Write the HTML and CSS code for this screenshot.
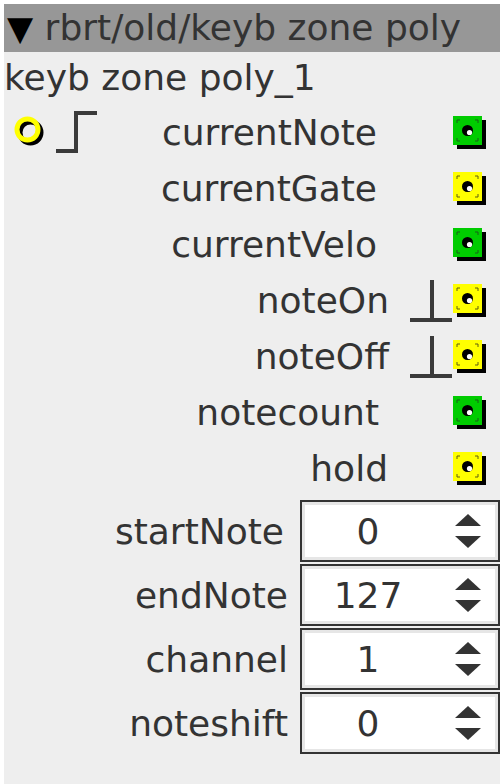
FILE: index.html
```html
<!DOCTYPE html>
<html lang="en">
<head>
    <meta charset="UTF-8">
    <meta name="viewport" content="width=device-width, initial-scale=1.0">
    <title>keyb zone poly</title>
    <link rel="stylesheet" href="styles.css">
</head>
<body>

    <div class="obj">
        <div class="obj-head"><span class="caret">▼</span> rbrt/old/keyb zone poly</div>
        <div class="obj-name">keyb zone poly_1</div>

        <div class="io-row">
            <div class="inlets">
                <svg class="inlet" width="34" height="34" viewBox="0 0 34 34">
                    <circle cx="16.5" cy="16.5" r="10.5" fill="none" stroke="#000" stroke-width="5"/>
                    <circle cx="13.5" cy="13.5" r="10.5" fill="none" stroke="#ffff00" stroke-width="5"/>
                </svg>
                <svg class="step" width="44" height="46" viewBox="0 0 44 46">
                    <path d="M1 41 H21 V3 H42" fill="none" stroke="#3a3a3a" stroke-width="4"/>
                </svg>
            </div>
            <span class="io-label">currentNote</span>
            <span class="io-icon"></span>
            <svg class="outlet" width="36" height="36" viewBox="0 0 36 36">
                <rect x="4" y="4" width="29" height="29" fill="#000"/>
                <rect x="0" y="0" width="29" height="29" fill="#00cc00"/>
                <path d="M4 7 V4 H7 M22 4 H25 V7 M25 22 V25 H22 M7 25 H4 V22" fill="none" stroke="#1b5e1b" stroke-width="1"/>
                <circle cx="14.5" cy="14.5" r="5.5" fill="#000"/>
                <circle cx="16.5" cy="16.5" r="2.6" fill="#fff"/>
            </svg>
        </div>

        <div class="io-row">
            <span class="io-label">currentGate</span>
            <span class="io-icon"></span>
            <svg class="outlet" width="36" height="36" viewBox="0 0 36 36">
                <rect x="4" y="4" width="29" height="29" fill="#000"/>
                <rect x="0" y="0" width="29" height="29" fill="#ffff00"/>
                <path d="M4 7 V4 H7 M22 4 H25 V7 M25 22 V25 H22 M7 25 H4 V22" fill="none" stroke="#5e5e10" stroke-width="1"/>
                <circle cx="14.5" cy="14.5" r="5.5" fill="#000"/>
                <circle cx="16.5" cy="16.5" r="2.6" fill="#fff"/>
            </svg>
        </div>

        <div class="io-row">
            <span class="io-label">currentVelo</span>
            <span class="io-icon"></span>
            <svg class="outlet" width="36" height="36" viewBox="0 0 36 36">
                <rect x="4" y="4" width="29" height="29" fill="#000"/>
                <rect x="0" y="0" width="29" height="29" fill="#00cc00"/>
                <path d="M4 7 V4 H7 M22 4 H25 V7 M25 22 V25 H22 M7 25 H4 V22" fill="none" stroke="#1b5e1b" stroke-width="1"/>
                <circle cx="14.5" cy="14.5" r="5.5" fill="#000"/>
                <circle cx="16.5" cy="16.5" r="2.6" fill="#fff"/>
            </svg>
        </div>

        <div class="io-row">
            <span class="io-label io-label-trig">noteOn</span>
            <svg class="io-icon" width="44" height="46" viewBox="0 0 44 46">
                <path d="M2 42 H44 M24 2 V42" fill="none" stroke="#3a3a3a" stroke-width="4"/>
            </svg>
            <svg class="outlet" width="36" height="36" viewBox="0 0 36 36">
                <rect x="4" y="4" width="29" height="29" fill="#000"/>
                <rect x="0" y="0" width="29" height="29" fill="#ffff00"/>
                <path d="M4 7 V4 H7 M22 4 H25 V7 M25 22 V25 H22 M7 25 H4 V22" fill="none" stroke="#5e5e10" stroke-width="1"/>
                <circle cx="14.5" cy="14.5" r="5.5" fill="#000"/>
                <circle cx="16.5" cy="16.5" r="2.6" fill="#fff"/>
            </svg>
        </div>

        <div class="io-row">
            <span class="io-label io-label-trig">noteOff</span>
            <svg class="io-icon" width="44" height="46" viewBox="0 0 44 46">
                <path d="M2 42 H44 M24 2 V42" fill="none" stroke="#3a3a3a" stroke-width="4"/>
            </svg>
            <svg class="outlet" width="36" height="36" viewBox="0 0 36 36">
                <rect x="4" y="4" width="29" height="29" fill="#000"/>
                <rect x="0" y="0" width="29" height="29" fill="#ffff00"/>
                <path d="M4 7 V4 H7 M22 4 H25 V7 M25 22 V25 H22 M7 25 H4 V22" fill="none" stroke="#5e5e10" stroke-width="1"/>
                <circle cx="14.5" cy="14.5" r="5.5" fill="#000"/>
                <circle cx="16.5" cy="16.5" r="2.6" fill="#fff"/>
            </svg>
        </div>

        <div class="io-row">
            <span class="io-label io-label-count">notecount</span>
            <span class="io-icon"></span>
            <svg class="outlet" width="36" height="36" viewBox="0 0 36 36">
                <rect x="4" y="4" width="29" height="29" fill="#000"/>
                <rect x="0" y="0" width="29" height="29" fill="#00cc00"/>
                <path d="M4 7 V4 H7 M22 4 H25 V7 M25 22 V25 H22 M7 25 H4 V22" fill="none" stroke="#1b5e1b" stroke-width="1"/>
                <circle cx="14.5" cy="14.5" r="5.5" fill="#000"/>
                <circle cx="16.5" cy="16.5" r="2.6" fill="#fff"/>
            </svg>
        </div>

        <div class="io-row">
            <span class="io-label io-label-short">hold</span>
            <span class="io-icon"></span>
            <svg class="outlet" width="36" height="36" viewBox="0 0 36 36">
                <rect x="4" y="4" width="29" height="29" fill="#000"/>
                <rect x="0" y="0" width="29" height="29" fill="#ffff00"/>
                <path d="M4 7 V4 H7 M22 4 H25 V7 M25 22 V25 H22 M7 25 H4 V22" fill="none" stroke="#5e5e10" stroke-width="1"/>
                <circle cx="14.5" cy="14.5" r="5.5" fill="#000"/>
                <circle cx="16.5" cy="16.5" r="2.6" fill="#fff"/>
            </svg>
        </div>

        <div class="params">
            <div class="param-row">
                <span class="param-label param-label-start">startNote</span>
                <div class="spin">
                    <span class="spin-value">0</span>
                    <span class="spin-arrows"><span class="up"></span><span class="down"></span></span>
                </div>
            </div>
            <div class="param-row">
                <span class="param-label">endNote</span>
                <div class="spin">
                    <span class="spin-value">127</span>
                    <span class="spin-arrows"><span class="up"></span><span class="down"></span></span>
                </div>
            </div>
            <div class="param-row">
                <span class="param-label">channel</span>
                <div class="spin">
                    <span class="spin-value">1</span>
                    <span class="spin-arrows"><span class="up"></span><span class="down"></span></span>
                </div>
            </div>
            <div class="param-row">
                <span class="param-label">noteshift</span>
                <div class="spin">
                    <span class="spin-value">0</span>
                    <span class="spin-arrows"><span class="up"></span><span class="down"></span></span>
                </div>
            </div>
        </div>
    </div>

</body>
</html>
```

FILE: styles.css
```css
body {
    margin: 0;
    background-color: #ffffff;
    font-family: "DejaVu Sans", "Liberation Sans", sans-serif;
    color: #333333;
}
.obj {
    margin: 4px 4px 0 4px;
    background: #eeeeee;
    min-height: 780px;
}
.obj-head {
    height: 48px;
    line-height: 48px;
    background: #979797;
    font-size: 36px;
    padding-left: 3px;
    white-space: nowrap;
}
.caret {
    color: #000;
    font-size: 34px;
}
.obj-name {
    height: 52px;
    line-height: 52px;
    font-size: 36px;
    white-space: nowrap;
}
.io-row {
    display: flex;
    align-items: center;
    height: 56px;
    padding-right: 11px;
}
.inlets {
    display: flex;
    align-items: center;
    gap: 7px;
    padding-left: 10px;
    margin-top: 2px;
}
.io-label {
    flex: 1;
    text-align: right;
    font-size: 36px;
    padding-right: 31px;
}
.io-label-trig {
    padding-right: 19px;
}
.io-label-short {
    padding-right: 20px;
}
.io-label-count {
    padding-right: 29px;
}
.io-icon {
    width: 44px;
    height: 46px;
    flex: none;
    margin-top: 2px;
}
.outlet {
    flex: none;
    margin-left: 1px;
    margin-top: 4px;
}
.params {
    padding-top: 4px;
}
.param-row {
    display: flex;
    align-items: center;
    margin-bottom: 2px;
}
.param-label {
    flex: 1;
    text-align: right;
    font-size: 36px;
    padding-right: 12px;
}
.param-label-start {
    padding-right: 16px;
}
.spin {
    width: 200px;
    height: 62px;
    box-sizing: border-box;
    border: 2px solid #333333;
    background: #ffffff;
    box-shadow: inset 0 0 0 3px #e6e6e6;
    display: flex;
    align-items: center;
}
.spin-value {
    width: 132px;
    text-align: center;
    font-size: 36px;
}
.spin-arrows {
    display: flex;
    flex-direction: column;
    align-items: center;
    gap: 10px;
    margin-left: 21px;
}
.up, .down {
    width: 0;
    height: 0;
    border-left: 13px solid transparent;
    border-right: 13px solid transparent;
}
.up {
    border-bottom: 12px solid #333333;
}
.down {
    border-top: 12px solid #333333;
}
```
